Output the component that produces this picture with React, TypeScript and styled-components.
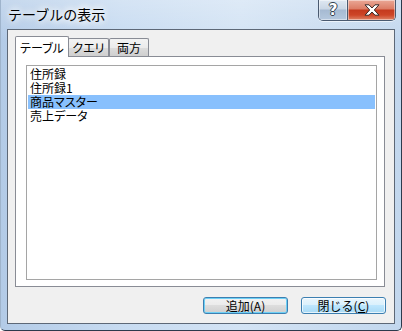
import React from 'react'
import styled, { createGlobalStyle, css } from 'styled-components'

const GlobalStyle = createGlobalStyle`
  html, body {
    margin: 0;
    padding: 0;
    background: #fff;
  }
  body {
    font-family: "Noto Sans CJK JP", "Noto Sans", sans-serif;
    font-size: 12px;
    color: #000;
  }
`

const Window = styled.div`
  width: 402px;
  height: 331px;
  box-sizing: border-box;
  display: flex;
  flex-direction: column;
  border-left: 1px solid #9fb4cc;
  border-right: 1px solid #2c3a4c;
  border-bottom: 1px solid #2c3a4c;
  border-radius: 0 0 5px 5px;
  background:
    linear-gradient(to bottom, rgba(255, 255, 255, 0.25), rgba(255, 255, 255, 0) 40px),
    linear-gradient(to right, #b3cbe7 0%, #c7dbf1 30%, #d3e3f4 60%, #c2d7ee 100%);
  overflow: hidden;
`

const TitleBar = styled.div`
  height: 29px;
  flex: none;
  display: flex;
  align-items: flex-start;
  justify-content: space-between;
  padding: 0 5px 0 7px;
`

const Title = styled.div`
  font-size: 14px;
  line-height: 14px;
  margin-top: 7px;
  color: #000;
  text-shadow: 0 0 6px #fff, 0 0 8px #fff, 0 0 10px rgba(255, 255, 255, 0.9);
`

const Caption = styled.div`
  display: flex;
  height: 20px;
  border: 1px solid #4a5a70;
  border-top: none;
  border-radius: 0 0 5px 5px;
  overflow: hidden;
  box-shadow: 0 1px 0 rgba(255, 255, 255, 0.6);
`

const CapButton = styled.div<{ $kind: 'help' | 'close' }>`
  height: 20px;
  display: flex;
  align-items: center;
  justify-content: center;
  box-shadow: inset 0 0 0 1px rgba(255, 255, 255, 0.45);
  ${(p) =>
    p.$kind === 'help'
      ? css`
          width: 28px;
          border-right: 1px solid #4a5a70;
          background: linear-gradient(#dfe8f2 0%, #c9d6e5 45%, #a6bad2 50%, #b5c8de 100%);
          color: #fff;
          font-family: "DejaVu Sans", sans-serif;
          font-weight: bold;
          font-size: 15px;
          line-height: 15px;
          text-shadow: -1px 0 #33414f, 1px 0 #33414f, 0 -1px #33414f, 0 1px #33414f;
        `
      : css`
          width: 47px;
          background: linear-gradient(#eaa896 0%, #dc7c65 45%, #c43a1e 50%, #cd4527 75%, #de8366 100%);
        `}
`

const Client = styled.div`
  flex: 1;
  margin: 0 6px 6px 6px;
  border: 1px solid #5d6877;
  background: #f0f0f0;
  display: flex;
  flex-direction: column;
  padding: 6px 8px 9px 7px;
`

const Tabs = styled.div`
  height: 251px;
  margin-right: 1px;
  display: flex;
  flex-direction: column;
`

const TabStrip = styled.div`
  display: flex;
  align-items: flex-start;
  height: 20px;
  position: relative;
  z-index: 1;
`

const Tab = styled.div<{ $active?: boolean; $w: number }>`
  box-sizing: border-box;
  width: ${(p) => p.$w}px;
  border: 1px solid #898c95;
  border-bottom: none;
  border-radius: 2px 2px 0 0;
  display: flex;
  align-items: center;
  justify-content: center;
  font-feature-settings: "palt";
  ${(p) =>
    p.$active
      ? css`
          height: 21px;
          background: #fff;
        `
      : css`
          height: 18px;
          margin-top: 2px;
          background: linear-gradient(#f3f3f3 0%, #ebebeb 50%, #dddddd 50%, #cfcfcf 100%);
        `}
  &:nth-child(2) {
    margin-left: -1px;
  }
`

const Panel = styled.div`
  flex: 1;
  border: 1px solid #898c95;
  background: #fff;
  display: flex;
  padding: 8px 7px 6px 10px;
`

const ListBox = styled.div`
  flex: 1;
  border: 1px solid #a5a5a5;
  padding: 1px;
  display: flex;
  flex-direction: column;
`

const Item = styled.div<{ $selected?: boolean }>`
  height: 14px;
  line-height: 14px;
  padding-left: 2px;
  white-space: nowrap;
  font-feature-settings: "palt";
  background: ${(p) => (p.$selected ? '#88c0fd' : 'transparent')};
`

const Footer = styled.div`
  margin-top: 10px;
  display: flex;
  justify-content: flex-end;
  gap: 13px;
`

const Button = styled.div<{ $variant: 'default' | 'hover' }>`
  box-sizing: border-box;
  width: 85px;
  height: 17px;
  border-radius: 3px;
  border: 1px solid #3c7fb1;
  display: flex;
  align-items: center;
  justify-content: center;
  font-size: 12px;
  line-height: 12px;
  ${(p) =>
    p.$variant === 'default'
      ? css`
          background: linear-gradient(#f2f2f2 0%, #ebebeb 50%, #dddddd 50%, #cfcfcf 100%);
          box-shadow: inset 0 0 0 1px #6ed0f5;
        `
      : css`
          background: linear-gradient(#eaf6fd 0%, #d9f0fc 50%, #bee6fd 50%, #a7d9f5 100%);
          box-shadow: inset 0 0 0 1px rgba(255, 255, 255, 0.7);
        `}
  u {
    text-decoration: underline;
    text-underline-offset: 1px;
  }
`

const items = ['住所録', '住所録1', '商品マスター', '売上データ']

const App = () => {
  return (
    <>
      <GlobalStyle />
      <Window>
        <TitleBar>
          <Title>テーブルの表示</Title>
          <Caption>
            <CapButton $kind="help">?</CapButton>
            <CapButton $kind="close">
              <svg width="16" height="12" viewBox="0 0 16 12">
                <path
                  d="M1 0.8 H5 L8 4 L11 0.8 H15 L10.3 6 L15 11.2 H11 L8 8 L5 11.2 H1 L5.7 6 Z"
                  fill="#fff"
                  stroke="#3a2a28"
                  strokeWidth="1"
                  strokeLinejoin="round"
                />
              </svg>
            </CapButton>
          </Caption>
        </TitleBar>
        <Client>
          <Tabs>
            <TabStrip>
              <Tab $active $w={54}>テーブル</Tab>
              <Tab $w={41}>クエリ</Tab>
              <Tab $w={40}>両方</Tab>
            </TabStrip>
            <Panel>
              <ListBox>
                {items.map((name) => (
                  <Item key={name} $selected={name === '商品マスター'}>
                    {name}
                  </Item>
                ))}
              </ListBox>
            </Panel>
          </Tabs>
          <Footer>
            <Button $variant="default">追加(A)</Button>
            <Button $variant="hover">
              閉じる(<u>C</u>)
            </Button>
          </Footer>
        </Client>
      </Window>
    </>
  )
}

export default App
